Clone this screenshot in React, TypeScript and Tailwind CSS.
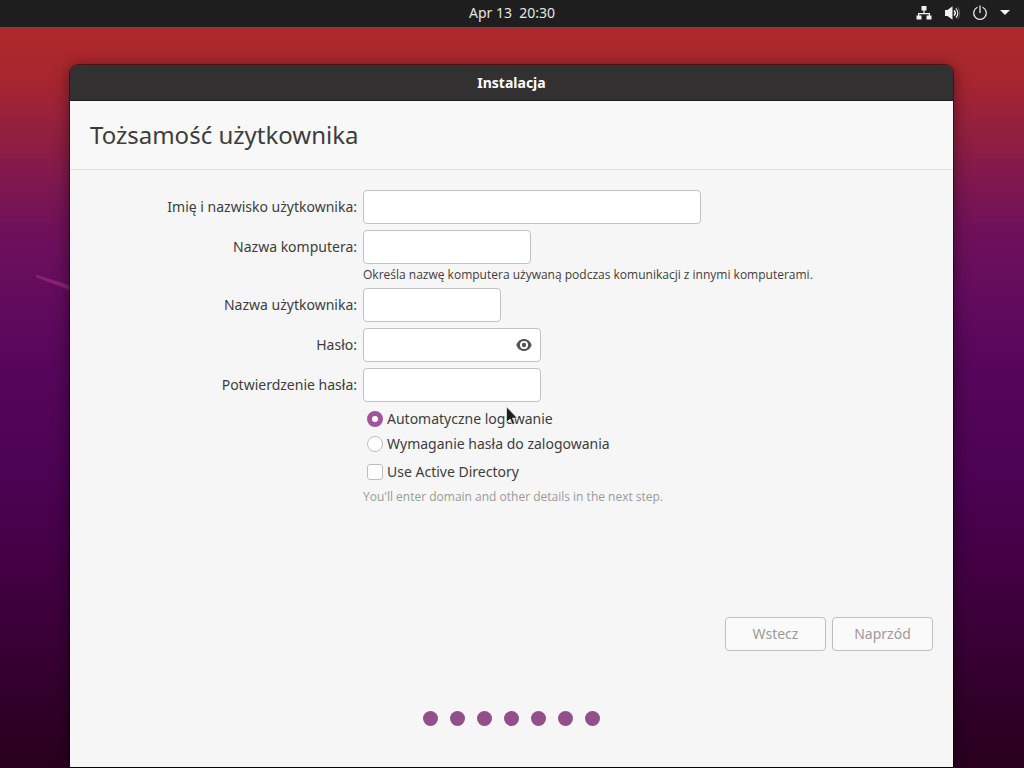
import { useState, type ReactNode } from 'react'

const fieldClass = 'h-[34px] rounded border border-[#c4c2c0] bg-white px-2 text-[14px] outline-none focus:border-[#924d8b]'
const radioClass =
  'mt-0.5 size-4 appearance-none rounded-full border border-[#c0bebc] bg-white checked:border-[5px] checked:border-[#a0559a]'

function FormRow({ label, id, children }: { label: string; id: string; children: ReactNode }) {
  return (
    <div className="flex gap-1.5">
      <label htmlFor={id} className="flex h-[34px] w-[267px] shrink-0 items-center justify-end pb-0.5 whitespace-nowrap">
        {label}
      </label>
      {children}
    </div>
  )
}

function TopBar() {
  return (
    <header className="relative grid h-[27px] shrink-0 grid-cols-3 items-center bg-[#1e1e1e] pb-0.5 text-sm text-[#e6e6e6]">
      <time className="col-start-2 text-center whitespace-pre">Apr 13  20:30</time>
      <div className="flex items-center justify-end gap-3 pr-[14px]">
        <svg className="size-4" viewBox="0 0 16 16" fill="#f2f2f2" aria-hidden="true">
          <path d="M5.500 1h5v4.500H8.600V8H14v2.500h1.500v4h-5v-4h2.200V9.200H3.300v1.300h2.200v4h-5v-4H2V8h5.400V5.500H5.500z" />
        </svg>
        <svg className="size-4" viewBox="0 0 16 16" fill="none" stroke="#f2f2f2" aria-hidden="true">
          <path d="M1 5h2.500L8.500 1.200v13.600L3.500 11H1z" fill="#f2f2f2" stroke="none" />
          <path d="M10 5.500c1.500 1.500 1.500 3.500 0 5" strokeWidth="1.600" />
          <path d="M11.800 3.300c2.700 2.700 2.700 6.700 0 9.400" strokeWidth="1.200" />
          <path d="M13.300 1.800c3.200 3.700 3.200 8.700 0 12.400" strokeWidth="0.800" opacity="0.400" />
        </svg>
        <svg className="size-4" viewBox="0 0 16 16" fill="none" stroke="#e6e6e6" strokeWidth="1.300" strokeLinecap="round" aria-hidden="true">
          <path d="M8 1v6.500M5 2.500a6.300 6.300 0 1 0 6 0" />
        </svg>
        <svg className="h-[5px] w-[10px]" viewBox="0 0 10 5" fill="#f2f2f2" aria-hidden="true">
          <path d="M0 0h10L5 5z" />
        </svg>
      </div>
    </header>
  )
}

export default function App() {
  const [login, setLogin] = useState('auto')
  const [showPassword, setShowPassword] = useState(false)

  return (
    <div className="relative flex min-h-screen flex-col overflow-hidden bg-[linear-gradient(to_bottom,#ae292a_27px,#a7262f_80px,#93203f_130px,#80184f_180px,#6f115a_230px,#620b5d_300px,#56065a_370px,#4b0352_480px,#40003f_590px,#32002c_690px,#29001d_768px)] font-['Noto_Sans',sans-serif] text-[14px] text-[#3d3d3d]">
      <svg className="absolute top-[274px] left-[34px] h-5 w-10" viewBox="0 0 40 20" aria-hidden="true">
        <path d="M2 2l36 14v-3L3 2z" fill="#982c7c" stroke="#982c7c" strokeWidth="2" opacity="0.700" />
      </svg>
      <TopBar />
      <main className="relative flex grow flex-col pt-[38px] pr-[71px] pb-px pl-[70px]">
        <section className="flex grow flex-col rounded-t-lg shadow-[0_3px_16px_1px_rgba(0,0,0,0.45),0_0_0_1px_rgba(0,0,0,0.45)]">
          <div className="flex h-9 items-center justify-center rounded-t-lg border-b border-[#1f1f1f] bg-[#323030] font-bold text-white">
            Instalacja
          </div>
          <div className="flex h-[69px] items-center border-b border-[#dcdcdc] bg-[#f8f8f8] px-5">
            <h1 className="text-2xl">Tożsamość użytkownika</h1>
          </div>
          <form className="flex grow flex-col bg-[#f6f6f6] px-5 pt-5" onSubmit={(e) => e.preventDefault()}>
            <div className="flex flex-col gap-1.5">
              <FormRow label="Imię i nazwisko użytkownika:" id="fullname">
                <input id="fullname" type="text" className={`${fieldClass} w-[338px]`} />
              </FormRow>
              <div>
                <FormRow label="Nazwa komputera:" id="hostname">
                  <input id="hostname" type="text" className={`${fieldClass} w-[168px]`} />
                </FormRow>
                <p className="-mb-1.5 pb-0.5 pl-[273px] font-['Open_Sans',sans-serif] text-xs leading-[22px]">
                  Określa nazwę komputera używaną podczas komunikacji z innymi komputerami.
                </p>
              </div>
              <FormRow label="Nazwa użytkownika:" id="username">
                <input id="username" type="text" className={`${fieldClass} w-[138px]`} />
              </FormRow>
              <FormRow label="Hasło:" id="password">
                <div className={`${fieldClass} flex w-[178px] items-center`}>
                  <input id="password" type={showPassword ? 'text' : 'password'} className="min-w-0 grow outline-none" />
                  <button type="button" aria-label="Pokaż hasło" onClick={() => setShowPassword(!showPassword)}>
                    <svg className="size-4" viewBox="0 0 16 16" aria-hidden="true">
                      <path
                        fill="#555"
                        fillRule="evenodd"
                        d="M8 2C4.500 2 1.500 4.300.3 8c1.200 3.700 4.200 6 7.700 6s6.500-2.300 7.700-6C14.500 4.300 11.500 2 8 2zm0 2a4 4 0 1 1 0 8 4 4 0 0 1 0-8z"
                      />
                      <circle cx="8" cy="8" r="2.200" fill="#555" />
                    </svg>
                  </button>
                </div>
              </FormRow>
              <FormRow label="Potwierdzenie hasła:" id="confirm">
                <input id="confirm" type="password" className={`${fieldClass} w-[178px]`} />
              </FormRow>
            </div>
            <div className="pt-1 pl-[277px]">
              <label className="flex h-[26px] items-center gap-1 pb-0.5">
                <input
                  type="radio"
                  name="login"
                  checked={login === 'auto'}
                  onChange={() => setLogin('auto')}
                  className={radioClass}
                />
                Automatyczne logowanie
              </label>
              <label className="flex h-6 items-center gap-1 pb-0.5">
                <input
                  type="radio"
                  name="login"
                  checked={login === 'password'}
                  onChange={() => setLogin('password')}
                  className={radioClass}
                />
                Wymaganie hasła do zalogowania
              </label>
              <label className="flex h-8 items-center gap-1 pb-0.5">
                <input
                  type="checkbox"
                  className="mt-0.5 size-4 appearance-none rounded-[3px] border border-[#c0bebc] bg-white checked:bg-[#a0559a]"
                />
                Use Active Directory
              </label>
            </div>
            <p className="pl-[273px] font-['Open_Sans',sans-serif] text-xs leading-[18px] text-[#9a9a9a]">
              You'll enter domain and other details in the next step.
            </p>
            <div className="mt-auto flex justify-end gap-1.5 pt-6">
              <button type="button" disabled className="h-[34px] w-[101px] rounded border border-[#c0bebc] bg-[#fafafa] pb-0.5 text-[#9a9a9a]">
                Wstecz
              </button>
              <button type="submit" disabled className="h-[34px] w-[101px] rounded border border-[#c0bebc] bg-[#fafafa] pb-0.5 text-[#9a9a9a]">
                Naprzód
              </button>
            </div>
            <div className="flex justify-center gap-3 pt-[60px] pb-[41px]">
              {[0, 1, 2, 3, 4, 5, 6].map((step) => (
                <span key={step} className="size-[15px] rounded-full bg-[#924f8a]" />
              ))}
            </div>
          </form>
        </section>
      </main>
      <svg className="pointer-events-none absolute top-[406px] left-[506px] h-5 w-3" viewBox="0 0 12 20" aria-hidden="true">
        <path d="M.5.800v15.500l3.600-3.300 2.400 5.600 2.300-1-2.400-5.500h4.900z" fill="#1c1c1c" stroke="#f6f6f6" strokeWidth="0.700" />
      </svg>
    </div>
  )
}
